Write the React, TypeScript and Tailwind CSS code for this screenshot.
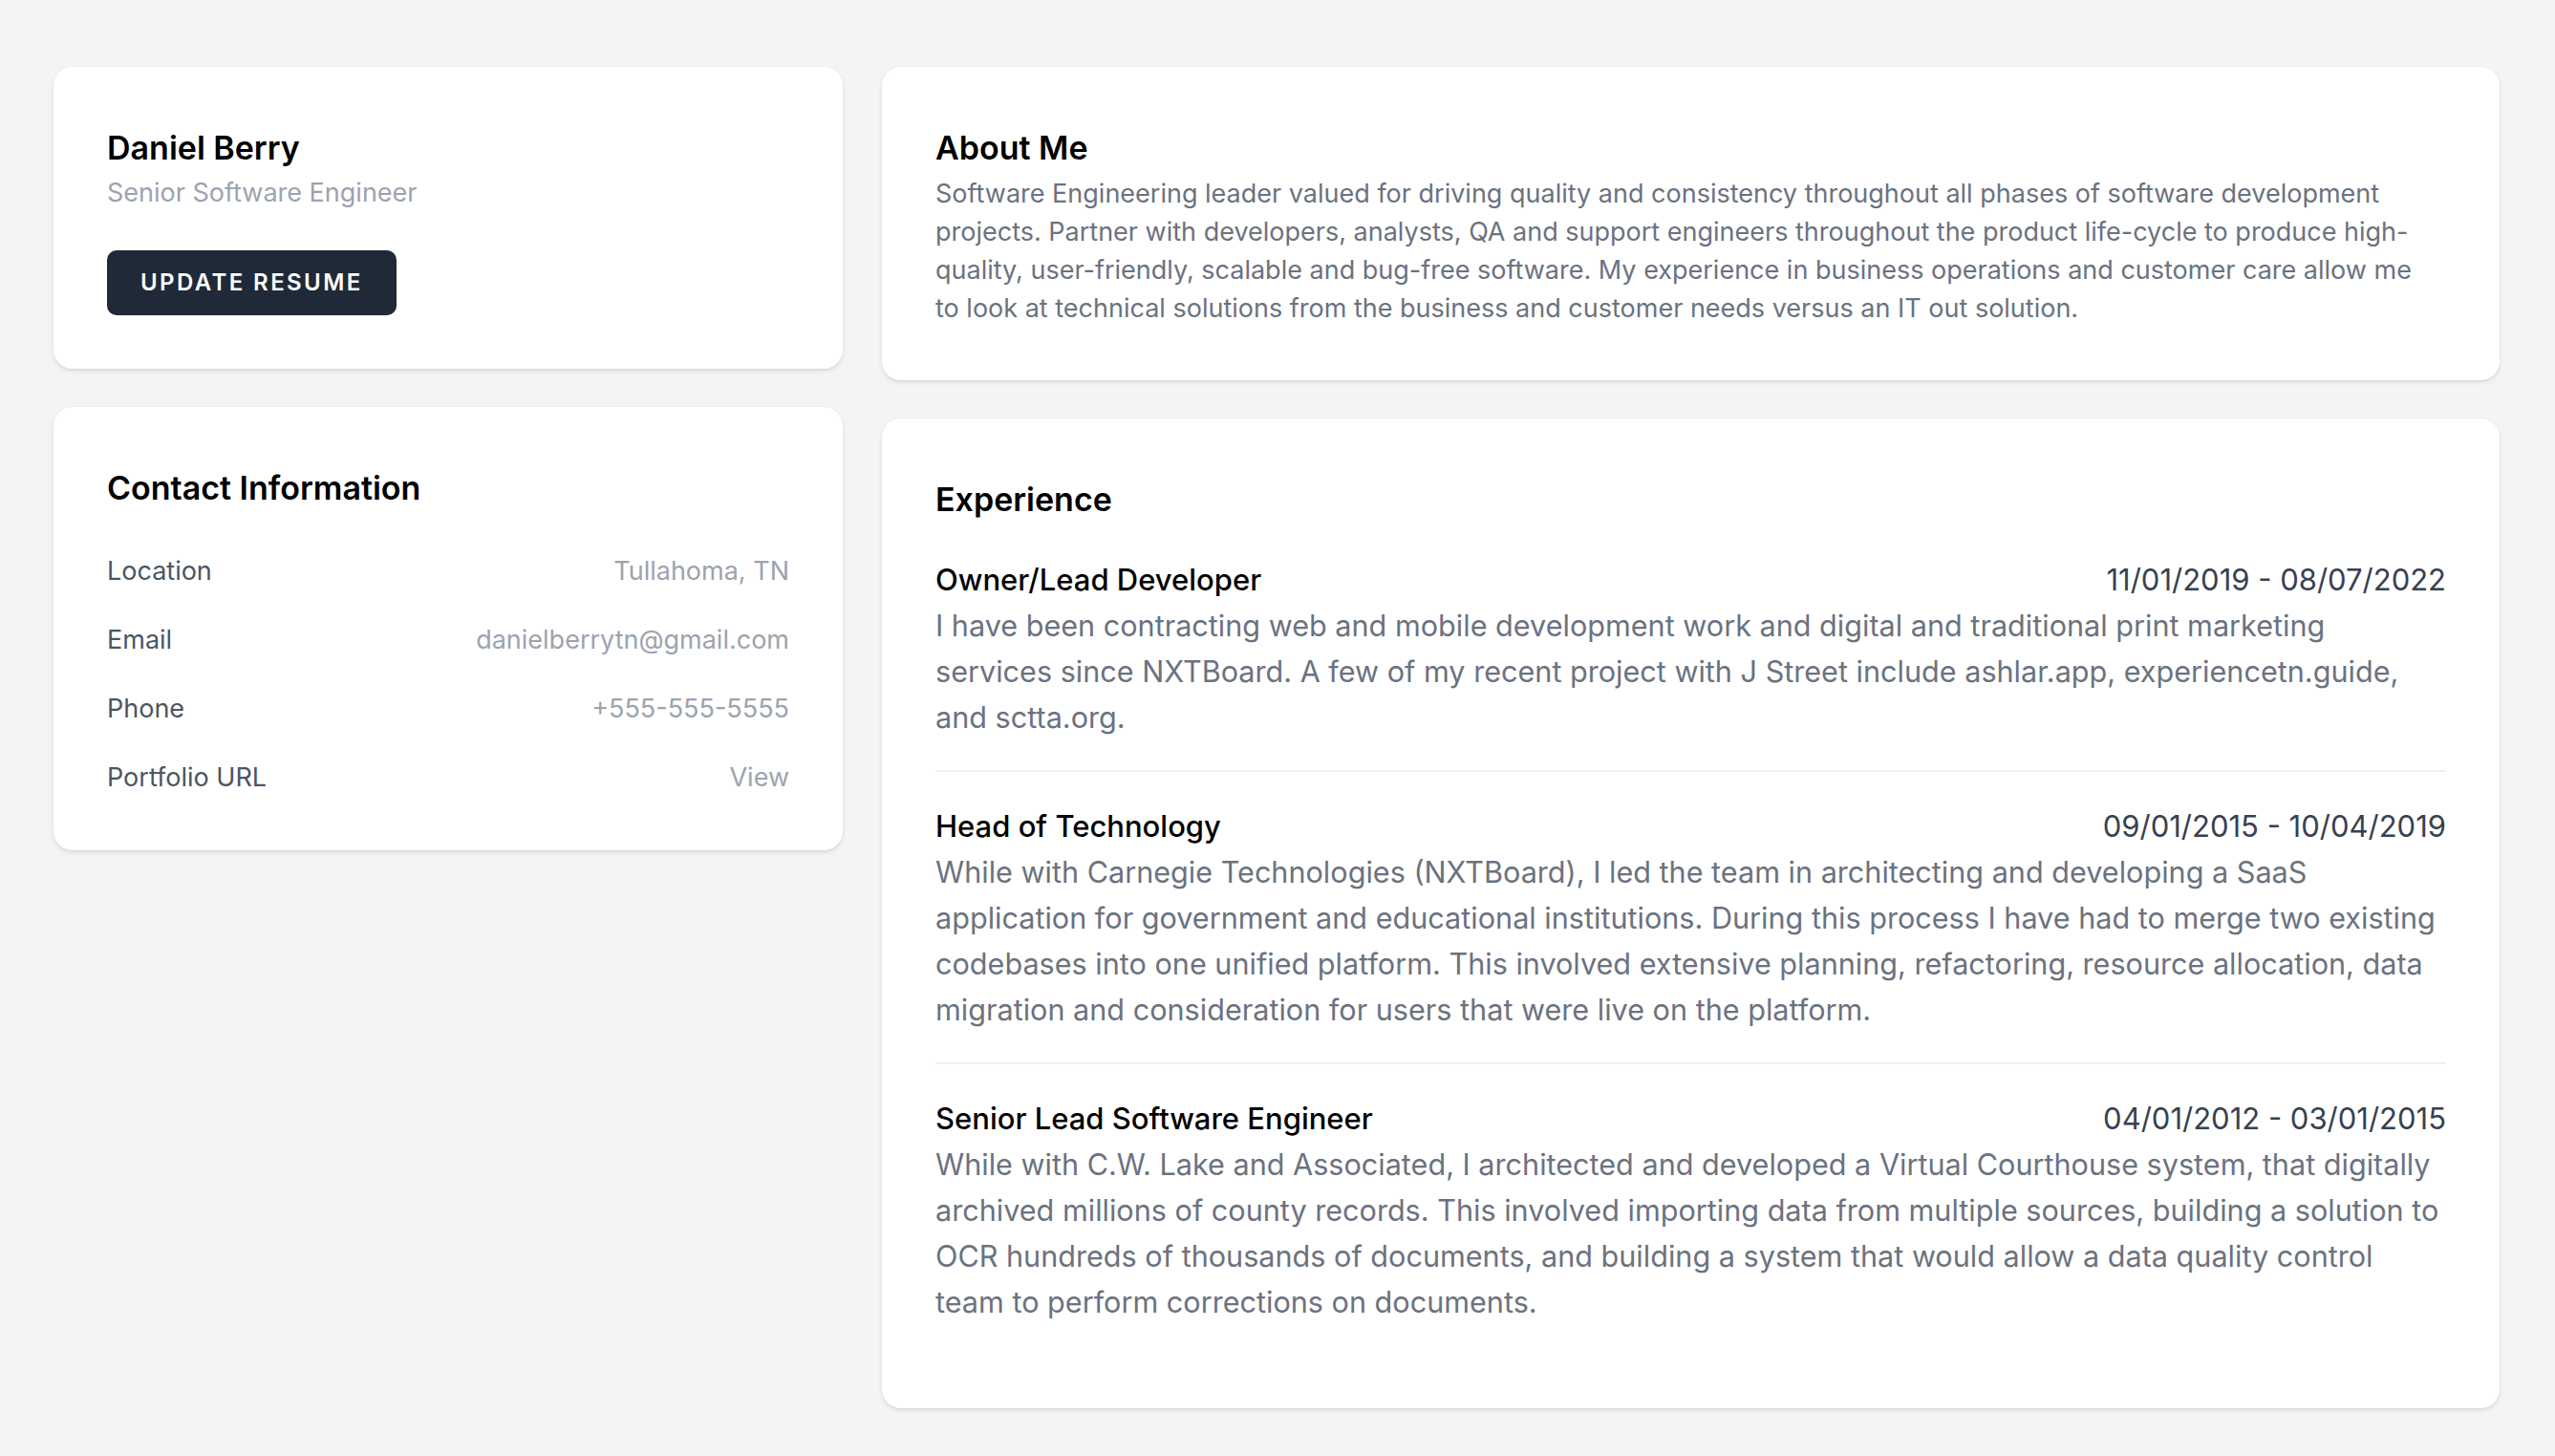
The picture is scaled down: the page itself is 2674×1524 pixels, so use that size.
import React from "react";

const contact = [
  { label: "Location", value: "Tullahoma, TN" },
  { label: "Email", value: "danielberrytn@gmail.com" },
  { label: "Phone", value: "+555-555-5555" },
  { label: "Portfolio URL", value: "View" },
];

const experience = [
  {
    title: "Owner/Lead Developer",
    dates: "11/01/2019 - 08/07/2022",
    lines: [
      "I have been contracting web and mobile development work and digital and traditional print marketing",
      "services since NXTBoard. A few of my recent project with J Street include ashlar.app, experiencetn.guide,",
      "and sctta.org.",
    ],
  },
  {
    title: "Head of Technology",
    dates: "09/01/2015 - 10/04/2019",
    lines: [
      "While with Carnegie Technologies (NXTBoard), I led the team in architecting and developing a SaaS",
      "application for government and educational institutions. During this process I have had to merge two existing",
      "codebases into one unified platform. This involved extensive planning, refactoring, resource allocation, data",
      "migration and consideration for users that were live on the platform.",
    ],
  },
  {
    title: "Senior Lead Software Engineer",
    dates: "04/01/2012 - 03/01/2015",
    lines: [
      "While with C.W. Lake and Associated, I architected and developed a Virtual Courthouse system, that digitally",
      "archived millions of county records. This involved importing data from multiple sources, building a solution to",
      "OCR hundreds of thousands of documents, and building a system that would allow a data quality control",
      "team to perform corrections on documents.",
    ],
  },
];

const about = [
  "Software Engineering leader valued for driving quality and consistency throughout all phases of software development",
  "projects. Partner with developers, analysts, QA and support engineers throughout the product life-cycle to produce high-",
  "quality, user-friendly, scalable and bug-free software. My experience in business operations and customer care allow me",
  "to look at technical solutions from the business and customer needs versus an IT out solution.",
];

function Lines({ lines }: { lines: string[] }) {
  return (
    <>
      {lines.map((l, i) => (
        <React.Fragment key={i}>
          {l}
          {i < lines.length - 1 && <br />}
        </React.Fragment>
      ))}
    </>
  );
}

const card =
  "bg-white rounded-[20px] p-[56px] shadow-[0_2px_5px_0_rgba(0,0,0,0.1),0_2px_3px_-2px_rgba(0,0,0,0.1)]";

export default function App() {
  return (
    <div className="min-h-screen bg-[#f3f4f6] pt-[70px] pl-[56px] pr-[58px] pb-[51px] font-['Inter',sans-serif] antialiased">
      <div className="flex items-start gap-[41px]">
        <div className="w-[826px] flex flex-col gap-[40px]">
          <div className={card}>
            <h1 className="pt-[5px] text-[34px] leading-[48px] font-semibold text-black">Daniel Berry</h1>
            <p className="mt-[6px] text-[27px] leading-[34px] text-[#9ca3af]">Senior Software Engineer</p>
            <button className="mt-[43px] bg-[#1f2937] text-white text-[24px] leading-[34px] font-semibold tracking-[0.1em] uppercase px-[35px] py-[17px] rounded-[10px]">
              Update Resume
            </button>
          </div>
          <div className={card}>
            <h2 className="pt-[5px] text-[34px] leading-[48px] font-semibold text-black">Contact Information</h2>
            <div className="mt-[42px] flex flex-col gap-[31px]">
              {contact.map((c) => (
                <div key={c.label} className="flex justify-between text-[27px] leading-[41px]">
                  <span className="text-[#4b5563]">{c.label}</span>
                  <span className="text-[#9ca3af]">{c.value}</span>
                </div>
              ))}
            </div>
          </div>
        </div>
        <div className="flex-1 flex flex-col gap-[40px]">
          <div className={card}>
            <h2 className="pt-[5px] text-[34px] leading-[48px] font-semibold text-black">About Me</h2>
            <p className="mt-[4px] mb-[-1px] text-[27px] leading-[40px] text-[#6b7280] whitespace-nowrap">
              <Lines lines={about} />
            </p>
          </div>
          <div className={card}>
            <h2 className="pt-[5px] text-[34px] leading-[48px] font-semibold text-black">Experience</h2>
            <div className="mt-[39px] flex flex-col">
              {experience.map((e, i) => (
                <div
                  key={e.title}
                  className={
                    i < experience.length - 1
                      ? "pb-[31px] border-b-2 border-[#eef0f2] mb-[36px]"
                      : "pb-[31px]"
                  }
                >
                  <div className="flex justify-between items-baseline text-[31px] leading-[41px]">
                    <span className="font-medium text-black">{e.title}</span>
                    <span className="text-[#374151]">{e.dates}</span>
                  </div>
                  <p className="mt-[4px] text-[30.6px] leading-[48px] text-[#6b7280] whitespace-nowrap">
                    <Lines lines={e.lines} />
                  </p>
                </div>
              ))}
            </div>
          </div>
        </div>
      </div>
    </div>
  );
}
